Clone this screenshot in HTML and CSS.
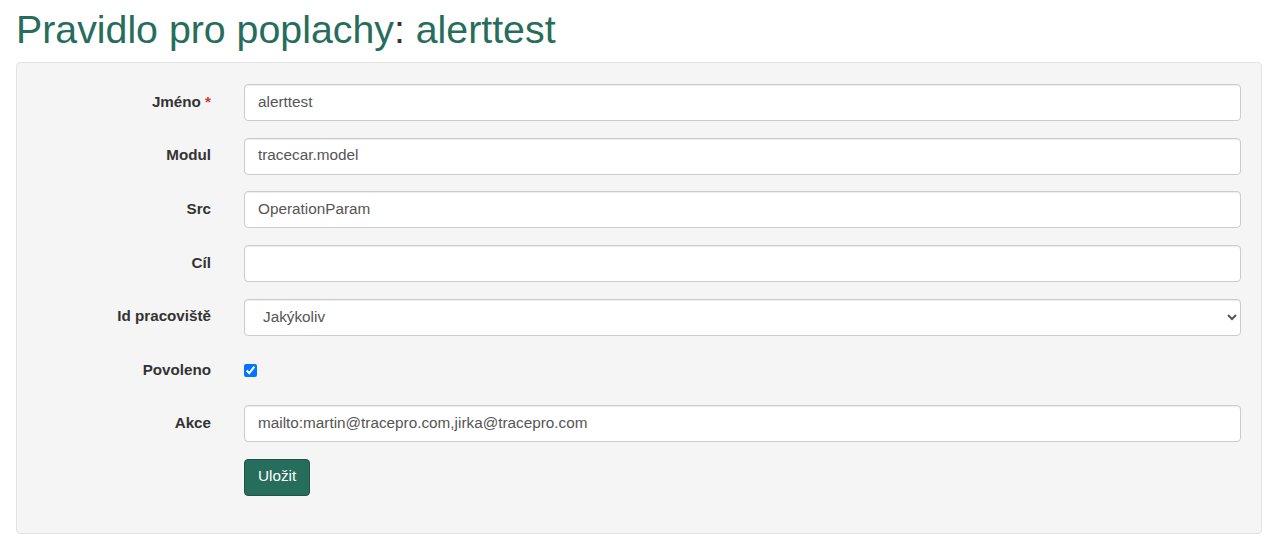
FILE: index.html
```html
<!DOCTYPE html>
<html lang="cs">
<head>
<meta charset="utf-8">
<title>Pravidlo pro poplachy</title>
<link rel="stylesheet" href="styles.css">
</head>
<body>
<div class="page">
  <h1 class="title">Pravidlo pro poplachy<span class="colon">:</span> alerttest</h1>
  <form class="card">
    <div class="row">
      <label class="lbl">Jméno <span class="req">*</span></label>
      <input class="ctl" type="text" value="alerttest">
    </div>
    <div class="row">
      <label class="lbl">Modul</label>
      <input class="ctl" type="text" value="tracecar.model">
    </div>
    <div class="row">
      <label class="lbl">Src</label>
      <input class="ctl" type="text" value="OperationParam">
    </div>
    <div class="row">
      <label class="lbl">Cíl</label>
      <input class="ctl" type="text" value="">
    </div>
    <div class="row">
      <label class="lbl">Id pracoviště</label>
      <select class="ctl sel"><option>Jakýkoliv</option></select>
    </div>
    <div class="row row-chk">
      <label class="lbl">Povoleno</label>
      <div class="chkwrap"><input class="chk" type="checkbox" checked></div>
    </div>
    <div class="row">
      <label class="lbl">Akce</label>
      <input class="ctl" type="text" value="mailto:martin@tracepro.com,jirka@tracepro.com">
    </div>
    <div class="row">
      <span></span>
      <div><button class="btn" type="button">Uložit</button></div>
    </div>
  </form>
</div>
</body>
</html>
```
FILE: styles.css
```css
html, body {
  margin: 0;
  padding: 0;
  background: #fff;
}
body {
  font-family: "Liberation Sans", Arial, sans-serif;
  font-size: 15px;
  color: #333;
}
.page {
  padding: 0 13px 0 16px;
}
.title {
  margin: 0;
  padding-top: 6px;
  height: 56px;
  font-size: 39.3px;
  font-weight: normal;
  line-height: 46px;
  color: #266d5c;
}
.colon {
  color: #333;
}
.card {
  margin: 0;
  background: #f5f5f5;
  border: 1px solid #e3e3e3;
  border-radius: 4px;
  padding: 21px 20px 37px 20px;
  display: flex;
  flex-direction: column;
  gap: 16.7px;
}
.row {
  display: grid;
  grid-template-columns: 174px 1fr;
  column-gap: 33px;
  align-items: center;
  min-height: 37px;
}
.row-chk {
  min-height: 36px;
}
.lbl {
  text-align: right;
  font-weight: bold;
  font-size: 15.2px;
  line-height: 20px;
  padding-bottom: 2px;
  color: #333;
}
.row-chk .lbl {
  padding-bottom: 0;
}
.req {
  color: #e0362b;
}
.ctl {
  box-sizing: border-box;
  height: 37px;
  width: 100%;
  margin: 0;
  padding: 5px 13px 7px;
  font-family: "Liberation Sans", Arial, sans-serif;
  font-size: 15.3px;
  color: #555;
  background: #fff;
  border: 1px solid #ccc;
  border-radius: 4px;
  box-shadow: inset 0 1px 1px rgba(0,0,0,0.075);
}
.sel {
  padding-left: 14px;
}
.chkwrap {
  display: flex;
  align-items: center;
  height: 36px;
}
.chk {
  margin: 0;
  width: 13px;
  height: 13px;
}
.btn {
  box-sizing: border-box;
  height: 37px;
  padding: 0 13px 2px;
  font-family: "Liberation Sans", Arial, sans-serif;
  font-size: 15.3px;
  color: #fff;
  background: #266d5c;
  border: 1px solid #1d5447;
  border-radius: 4px;
}
```
